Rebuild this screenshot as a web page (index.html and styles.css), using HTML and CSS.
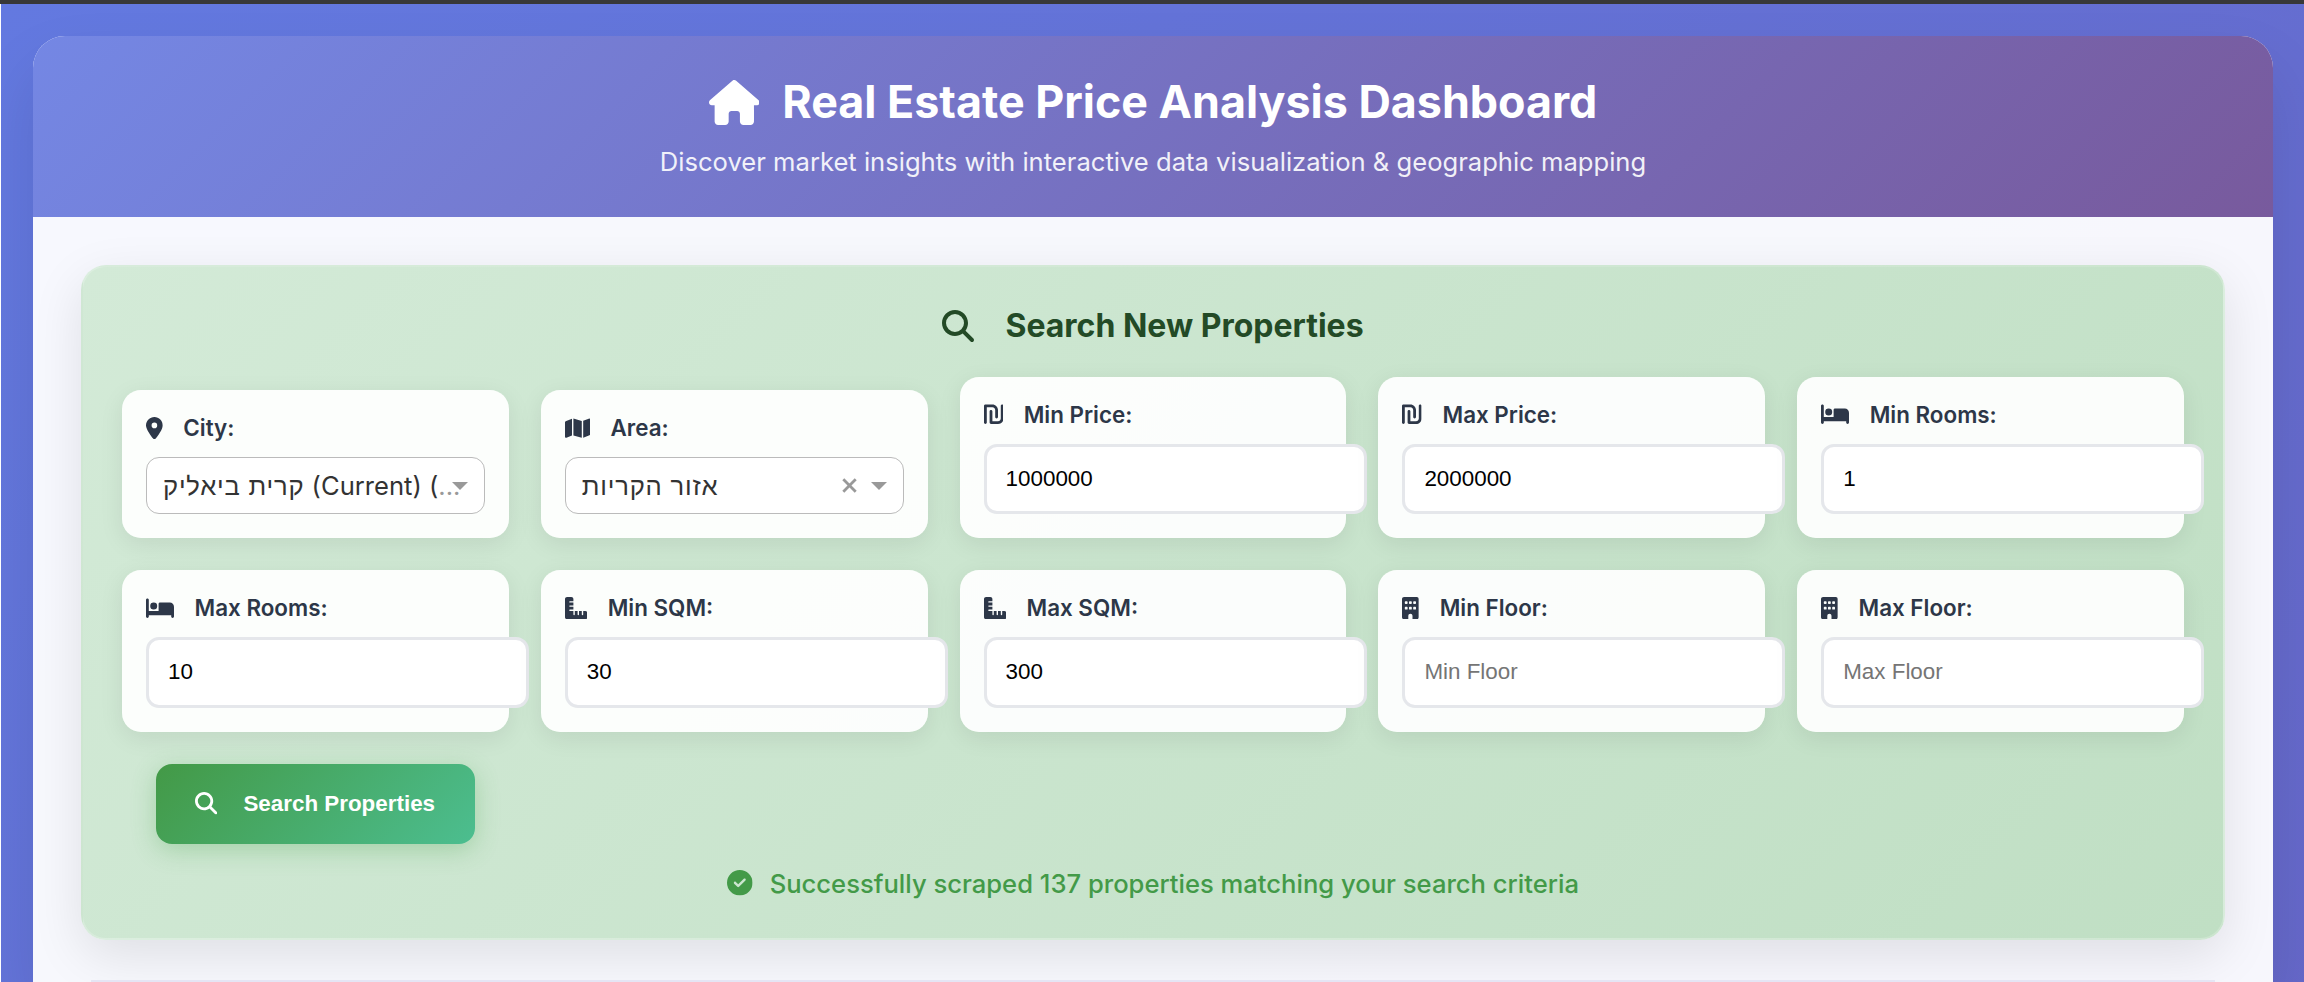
FILE: index.html
```
<!DOCTYPE html>
<html lang="en">
<head>
<meta charset="utf-8">
<title>Real Estate Price Analysis Dashboard</title>
<link rel="stylesheet" href="styles.css">
</head>
<body>
<svg class="sprite" aria-hidden="true">
  <symbol id="house" viewBox="0 0 576 512"><path d="M575.8 255.5c0 18-15 32.1-32 32.1h-32l.7 160.2c0 2.7-.2 5.4-.5 8.1V472c0 22.1-17.9 40-40 40H456c-1.1 0-2.2 0-3.3-.1c-1.4 .1-2.8 .1-4.2 .1H416 392c-22.1 0-40-17.9-40-40V448 384c0-17.7-14.3-32-32-32H256c-17.7 0-32 14.3-32 32v64 24c0 22.1-17.9 40-40 40H160 128.1c-1.5 0-3-.1-4.5-.2c-1.2 .1-2.4 .2-3.6 .2H104c-22.1 0-40-17.9-40-40V360c0-.9 0-1.9 .1-2.8V287.6H32c-18 0-32-14-32-32.1c0-9 3-17 10-24L266.4 8c7-7 15-8 22-8s15 2 21 7L564.8 231.5c8 7 12 15 11 24z"/></symbol>
  <symbol id="search" viewBox="0 0 512 512"><path d="M416 208c0 45.9-14.9 88.3-40 122.7L502.6 457.4c12.5 12.5 12.5 32.8 0 45.3s-32.8 12.5-45.3 0L330.7 376c-34.4 25.2-76.8 40-122.7 40C93.1 416 0 322.9 0 208S93.1 0 208 0S416 93.1 416 208zM208 352a144 144 0 1 0 0-288 144 144 0 1 0 0 288z"/></symbol>
  <symbol id="pin" viewBox="0 0 384 512"><path d="M215.7 499.2C267 435 384 279.4 384 192C384 86 298 0 192 0S0 86 0 192c0 87.4 117 243 168.3 307.2c12.3 15.3 35.1 15.3 47.4 0zM192 128a64 64 0 1 1 0 128 64 64 0 1 1 0-128z"/></symbol>
  <symbol id="map" viewBox="0 0 576 512"><path d="M384 476.1L192 421.2V35.9L384 90.8V476.1zm32-1.2V88.4L543.1 37.5c15.8-6.3 32.9 5.3 32.9 22.3V394.6c0 9.8-6 18.6-15.1 22.3L416 474.8zM15.1 95.1L160 37.2V423.6L32.9 474.5C17.1 480.8 0 469.2 0 452.2V117.4c0-9.8 6-18.6 15.1-22.3z"/></symbol>
  <symbol id="shekel" viewBox="0 0 448 512"><path d="M32 32C14.3 32 0 46.3 0 64V448c0 17.7 14.3 32 32 32s32-14.3 32-32V96H192c35.3 0 64 28.7 64 64V320c0 17.7 14.3 32 32 32s32-14.3 32-32V160c0-70.7-57.3-128-128-128H32zM320 480c70.7 0 128-57.3 128-128V64c0-17.7-14.3-32-32-32s-32 14.3-32 32V352c0 35.3-28.7 64-64 64H192V192c0-17.7-14.3-32-32-32s-32 14.3-32 32V448c0 17.7 14.3 32 32 32H320z"/></symbol>
  <symbol id="bed" viewBox="0 0 640 512"><path d="M32 32c17.7 0 32 14.3 32 32V320H288V160c0-17.7 14.3-32 32-32H544c53 0 96 43 96 96V448c0 17.7-14.3 32-32 32s-32-14.3-32-32V416H352 320 64v32c0 17.7-14.3 32-32 32s-32-14.3-32-32V64C0 46.3 14.3 32 32 32zm144 96a80 80 0 1 1 0 160 80 80 0 1 1 0-160z"/></symbol>
  <symbol id="ruler" viewBox="0 0 512 512"><path d="M.2 468.9C2.7 493.1 23.1 512 48 512l96 0 320 0c26.5 0 48-21.5 48-48l0-96c0-26.5-21.5-48-48-48l-48 0 0 80c0 8.8-7.2 16-16 16s-16-7.2-16-16l0-80-64 0 0 80c0 8.8-7.2 16-16 16s-16-7.2-16-16l0-80-64 0 0 80c0 8.8-7.2 16-16 16s-16-7.2-16-16l0-80-80 0c-8.8 0-16-7.2-16-16s7.2-16 16-16l80 0 0-64-80 0c-8.8 0-16-7.2-16-16s7.2-16 16-16l80 0 0-64-80 0c-8.8 0-16-7.2-16-16s7.2-16 16-16l80 0 0-48c0-26.5-21.5-48-48-48L48 0C21.5 0 0 21.5 0 48L0 368l0 96c0 1.7 .1 3.3 .2 4.9z"/></symbol>
  <symbol id="building" viewBox="0 0 384 512"><path d="M48 0C21.5 0 0 21.5 0 48V464c0 26.5 21.5 48 48 48h96V432c0-26.5 21.5-48 48-48s48 21.5 48 48v80h96c26.5 0 48-21.5 48-48V48c0-26.5-21.5-48-48-48H48zM64 240c0-8.8 7.2-16 16-16h32c8.8 0 16 7.2 16 16v32c0 8.8-7.2 16-16 16H80c-8.8 0-16-7.2-16-16V240zm112-16h32c8.8 0 16 7.2 16 16v32c0 8.8-7.2 16-16 16H176c-8.8 0-16-7.2-16-16V240c0-8.8 7.2-16 16-16zm80 16c0-8.8 7.2-16 16-16h32c8.8 0 16 7.2 16 16v32c0 8.8-7.2 16-16 16H272c-8.8 0-16-7.2-16-16V240zM80 96h32c8.8 0 16 7.2 16 16v32c0 8.8-7.2 16-16 16H80c-8.8 0-16-7.2-16-16V112c0-8.8 7.2-16 16-16zm80 16c0-8.8 7.2-16 16-16h32c8.8 0 16 7.2 16 16v32c0 8.8-7.2 16-16 16H176c-8.8 0-16-7.2-16-16V112zM272 96h32c8.8 0 16 7.2 16 16v32c0 8.8-7.2 16-16 16H272c-8.8 0-16-7.2-16-16V112c0-8.8 7.2-16 16-16z"/></symbol>
  <symbol id="check" viewBox="0 0 512 512"><path d="M256 512A256 256 0 1 0 256 0a256 256 0 1 0 0 512zM369 209L241 337c-9.4 9.4-24.6 9.4-33.9 0l-64-64c-9.4-9.4-9.4-24.6 0-33.9s24.6-9.4 33.9 0l47 47L335 175c9.4-9.4 24.6-9.4 33.9 0s9.4 24.6 0 33.9z"/></symbol>
</svg>
<div class="page">
  <main class="container">
    <header class="header">
      <h1 class="title"><svg class="icon title-icon" viewBox="0 0 576 512"><use href="#house"/></svg><span>Real Estate Price Analysis Dashboard</span></h1>
      <p class="subtitle">Discover market insights with interactive data visualization &amp; geographic mapping</p>
    </header>
    <div class="content">
      <section class="panel">
        <h2 class="panel-title"><svg class="icon panel-icon" viewBox="0 0 512 512"><use href="#search"/></svg><span>Search New Properties</span></h2>
        <div class="grid">
          <div class="card">
            <label class="label"><svg class="icon" viewBox="0 0 384 512"><use href="#pin"/></svg><span>City:</span></label>
            <div class="select"><span class="value"><span class="hebrew">קרית ביאליק</span> (Current) (<span class="dots">...</span></span><span class="arrow"></span></div>
          </div>
          <div class="card">
            <label class="label"><svg class="icon wide" viewBox="0 0 576 512"><use href="#map"/></svg><span>Area:</span></label>
            <div class="select"><span class="value"><span class="hebrew">אזור הקריות</span></span><svg class="clear" viewBox="0 0 14 14"><path d="M1.2 1.2l11.6 11.6M12.8 1.2l-11.6 11.6"/></svg><span class="arrow"></span></div>
          </div>
          <div class="card">
            <label class="label"><svg class="icon mid" viewBox="0 0 448 512"><use href="#shekel"/></svg><span>Min Price:</span></label>
            <input class="input" value="1000000">
          </div>
          <div class="card">
            <label class="label"><svg class="icon mid" viewBox="0 0 448 512"><use href="#shekel"/></svg><span>Max Price:</span></label>
            <input class="input" value="2000000">
          </div>
          <div class="card">
            <label class="label"><svg class="icon bed" viewBox="0 0 640 512"><use href="#bed"/></svg><span>Min Rooms:</span></label>
            <input class="input" value="1">
          </div>
          <div class="card">
            <label class="label"><svg class="icon bed" viewBox="0 0 640 512"><use href="#bed"/></svg><span>Max Rooms:</span></label>
            <input class="input" value="10">
          </div>
          <div class="card">
            <label class="label"><svg class="icon square" viewBox="0 0 512 512"><use href="#ruler"/></svg><span>Min SQM:</span></label>
            <input class="input" value="30">
          </div>
          <div class="card">
            <label class="label"><svg class="icon square" viewBox="0 0 512 512"><use href="#ruler"/></svg><span>Max SQM:</span></label>
            <input class="input" value="300">
          </div>
          <div class="card">
            <label class="label"><svg class="icon" viewBox="0 0 384 512"><use href="#building"/></svg><span>Min Floor:</span></label>
            <input class="input" placeholder="Min Floor">
          </div>
          <div class="card">
            <label class="label"><svg class="icon" viewBox="0 0 384 512"><use href="#building"/></svg><span>Max Floor:</span></label>
            <input class="input" placeholder="Max Floor">
          </div>
          <button class="button"><svg class="icon square" viewBox="0 0 512 512"><use href="#search"/></svg><span>Search Properties</span></button>
        </div>
        <p class="status"><svg class="icon status-icon" viewBox="0 0 512 512"><use href="#check"/></svg><span>Successfully scraped 137 properties matching your search criteria</span></p>
      </section>
      <section class="next-panel"></section>
    </div>
  </main>
</div>
</body>
</html>
```
FILE: styles.css
```
* { box-sizing: border-box; }
html, body { height: 982px; overflow: hidden; }
body {
  margin: 0;
  background: #fff;
  border-top: 4px solid #383838;
  padding-left: 1px;
  font-family: Inter, "Liberation Sans", "DejaVu Sans", sans-serif;
}
.sprite { display: none; }
.icon { display: block; flex: none; height: 22.4px; width: 16.8px; fill: currentColor; }
.icon.mid { width: 19.6px; }
.icon.square { width: 22.4px; }
.icon.wide { width: 25.2px; }
.icon.bed { width: 28px; }
.page {
  height: 978px;
  padding: 32px 31px 0 32px;
  overflow: hidden;
  background: linear-gradient(135deg, #6379e0 0%, #6859b5 100%) 0 0 / 100% 4000px no-repeat;
}
.container {
  display: flex;
  flex-direction: column;
  height: 946px;
  border-radius: 32px 32px 0 0;
  overflow: hidden;
  background: rgba(255, 255, 255, .95);
  box-shadow: 0 32px 64px rgba(0, 0, 0, .1);
}
.header {
  flex: none;
  height: 181px;
  padding-top: 38px;
  display: flex;
  flex-direction: column;
  align-items: center;
  color: #fff;
  background: linear-gradient(135deg, #7487e4, #785a9d);
}
.title {
  display: flex;
  align-items: center;
  gap: 23px;
  margin: 0;
  height: 56px;
  font-size: 44.8px;
  font-weight: 700;
  white-space: nowrap;
}
.title-icon { width: 50.6px; height: 45px; }
.subtitle { margin: 16px 0 0; font-size: 25.6px; line-height: 32px; opacity: .9; white-space: nowrap; }
.content {
  flex: 1;
  min-height: 0;
  display: flex;
  flex-direction: column;
  gap: 40px;
  padding: 48px 48px 0;
}
.panel {
  flex: none;
  height: 675px;
  padding: 39px;
  border: 2px solid rgba(255, 255, 255, .2);
  border-radius: 25px;
  background: linear-gradient(135deg, #d3ead7, #c0dfc4);
  box-shadow: 0 16px 51px rgba(0, 0, 0, .1);
}
.panel-title {
  display: flex;
  justify-content: center;
  align-items: center;
  gap: 31px;
  height: 39px;
  margin: 0 0 32px;
  font-size: 32px;
  font-weight: 700;
  color: #234a26;
  white-space: nowrap;
}
.panel-icon { width: 32px; height: 32px; }
.grid { display: grid; grid-template-columns: repeat(5, minmax(0, 1fr)); gap: 32px; align-items: end; }
.card {
  padding: 24px;
  border-radius: 19px;
  background: rgba(255, 255, 255, .93);
  box-shadow: 0 6px 24px rgba(0, 0, 0, .08);
}
.label {
  display: flex;
  align-items: center;
  gap: 20.5px;
  height: 27px;
  margin-bottom: 16px;
  font-size: 22.4px;
  font-weight: 600;
  color: #2d3748;
  white-space: nowrap;
}
.select {
  display: flex;
  align-items: center;
  height: 57px;
  padding: 0 16px;
  border: 1px solid #bbb;
  border-radius: 13px;
  background: #fff;
  color: #333;
  font-size: 25.6px;
}
.value { flex: 1; min-width: 0; white-space: nowrap; }
.hebrew { letter-spacing: .8px; }
.dots { color: #999; }
.arrow { border: 8px solid transparent; border-top-color: #999; border-bottom: 0; }
.clear { width: 15px; height: 15px; margin-right: 14px; stroke: #999; stroke-width: 2.6; }
.input {
  display: block;
  width: 383px;
  height: 70.3px;
  padding: 0 19px;
  border: 3px solid #e5e7eb;
  border-radius: 13px;
  background: #fff;
  color: #000;
  font: 22.4px "Liberation Sans", Arial, sans-serif;
}
.input::placeholder { color: #757575; opacity: 1; }
.button {
  display: flex;
  align-items: center;
  gap: 26px;
  width: 319px;
  height: 80px;
  margin-left: 34px;
  padding: 0 39px;
  border: 0;
  border-radius: 16px;
  background: linear-gradient(135deg, #439946, #4cbe90);
  box-shadow: 0 6px 24px rgba(67, 160, 71, .3);
  color: #fff;
  font: 700 22.4px "Liberation Sans", Arial, sans-serif;
  white-space: nowrap;
}
.status {
  display: flex;
  justify-content: center;
  align-items: center;
  gap: 17px;
  height: 32px;
  margin: 23.6px 0 0;
  color: #439a48;
  font-size: 25.6px;
  font-weight: 500;
  white-space: nowrap;
}
.status-icon { width: 25.6px; height: 25.6px; }
.next-panel { flex: 1; min-height: 0; margin: 0 10px; background: #e5e5f4; }
```
